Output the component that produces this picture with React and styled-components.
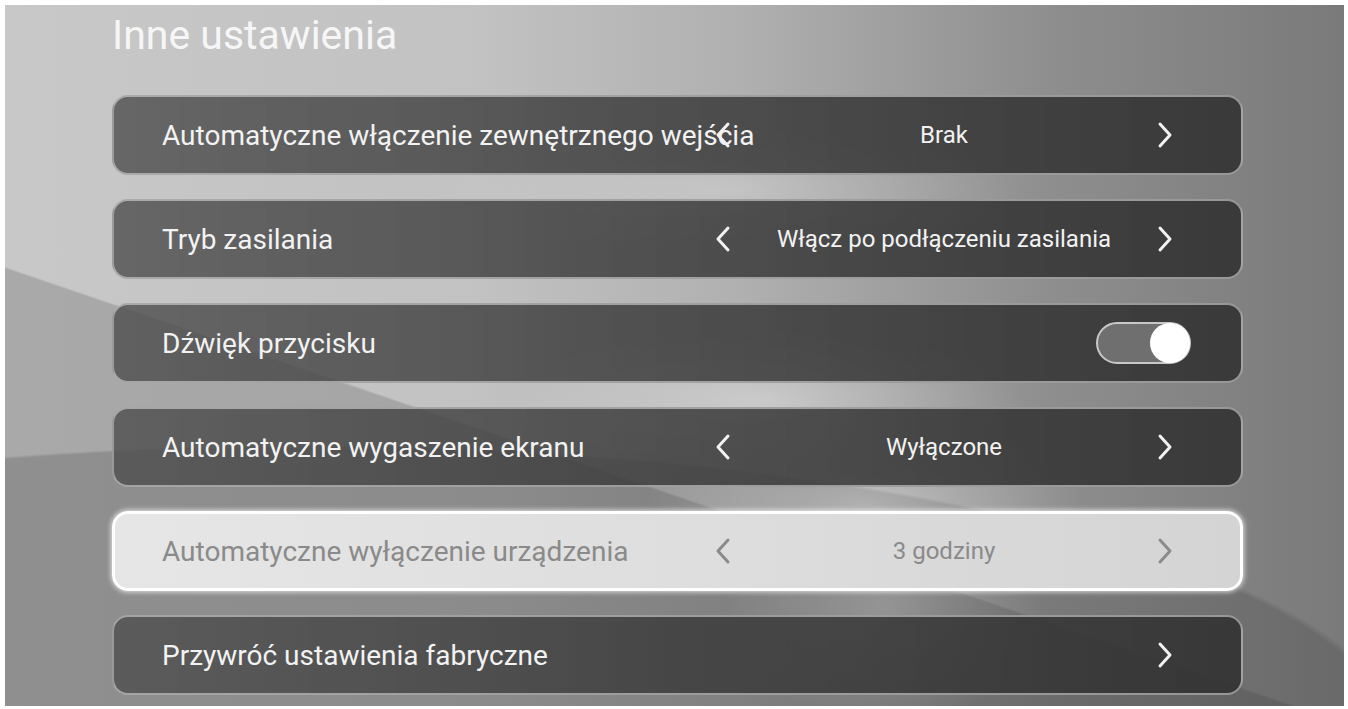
import React from 'react';
import styled, { createGlobalStyle } from 'styled-components';

const GlobalStyle = createGlobalStyle`
  html, body {
    margin: 0;
    padding: 0;
    background: #ffffff;
  }
  body {
    font-family: Roboto, "Noto Sans", "Liberation Sans", sans-serif;
  }
`;

const settings = [
  {
    label: 'Automatyczne włączenie zewnętrznego wejścia',
    value: 'Brak',
    prev: true,
    next: true,
  },
  {
    label: 'Tryb zasilania',
    value: 'Włącz po podłączeniu zasilania',
    prev: true,
    next: true,
  },
  { label: 'Dźwięk przycisku', toggle: true },
  {
    label: 'Automatyczne wygaszenie ekranu',
    value: 'Wyłączone',
    prev: true,
    next: true,
  },
  {
    label: 'Automatyczne wyłączenie urządzenia',
    value: '3 godziny',
    prev: true,
    next: true,
    focused: true,
  },
  { label: 'Przywróć ustawienia fabryczne', next: true },
];

const Chevron = ({ dir }) => (
  <svg width="16" height="28" viewBox="0 0 16 28" fill="none">
    <polyline
      points={dir === 'left' ? '13,3 3,14 13,25' : '3,3 13,14 3,25'}
      stroke="currentColor"
      strokeWidth="3"
      strokeLinecap="round"
      strokeLinejoin="round"
    />
  </svg>
);

const App = () => {
  return (
    <>
      <GlobalStyle />
      <Page>
        <Screen>
          <Title>Inne ustawienia</Title>
          <SettingsList>
            {settings.map(({ label, value, prev, next, toggle, focused }) => (
              <SettingRow key={label} focused={focused}>
                <Label>{label}</Label>
                {prev && (
                  <Arrow col={2}>
                    <Chevron dir="left" />
                  </Arrow>
                )}
                {value && <Value>{value}</Value>}
                {next && (
                  <Arrow col={4}>
                    <Chevron dir="right" />
                  </Arrow>
                )}
                {toggle && (
                  <Toggle>
                    <Knob />
                  </Toggle>
                )}
              </SettingRow>
            ))}
          </SettingsList>
        </Screen>
      </Page>
    </>
  );
};

const Page = styled.div`
  width: 1348px;
  height: 709px;
  box-sizing: border-box;
  padding: 5px 4px 3px 5px;
  background: #ffffff;
`;

const Screen = styled.div`
  width: 1339px;
  height: 701px;
  box-sizing: border-box;
  padding: 6px 101px 0 107px;
  overflow: hidden;
  background:
    radial-gradient(ellipse 260px 70px at 760px 395px, rgba(255, 255, 255, 0.35), rgba(255, 255, 255, 0) 100%),
    radial-gradient(ellipse 220px 90px at 860px 500px, rgba(255, 255, 255, 0.3), rgba(255, 255, 255, 0) 100%),
    radial-gradient(ellipse 160px 120px at 880px 600px, rgba(255, 255, 255, 0.22), rgba(255, 255, 255, 0) 100%),
    radial-gradient(ellipse 300px 60px at 720px 185px, rgba(255, 255, 255, 0.25), rgba(255, 255, 255, 0) 100%),
    radial-gradient(ellipse 1100px 300px at 300px 740px, rgba(40, 40, 40, 0.2) 99%, rgba(40, 40, 40, 0) 100%),
    linear-gradient(198.8deg, rgba(60, 60, 60, 0) 62%, rgba(60, 60, 60, 0.22) 62.2%),
    linear-gradient(90deg, #c8c8c8 0%, #c2c2c2 35%, #b0b0b0 55%, #8e8e8e 78%, #7a7a7a 100%);
`;

const Title = styled.h1`
  margin: 0;
  font-size: 41px;
  line-height: 48px;
  font-weight: 400;
  color: #f6f6f6;
`;

const SettingsList = styled.div`
  display: flex;
  flex-direction: column;
  gap: 24px;
  margin-top: 36px;
`;

const SettingRow = styled.div`
  display: grid;
  grid-template-columns: 551px 20px 1fr 20px;
  align-items: center;
  height: 80px;
  box-sizing: border-box;
  padding: ${(props) => (props.focused ? '0 65px 0 47px' : '0 66px 0 48px')};
  border-radius: 16px;
  border: ${(props) => (props.focused ? '3px solid #ffffff' : '2px solid rgba(215, 215, 215, 0.6)')};
  background: ${(props) =>
    props.focused
      ? 'linear-gradient(90deg, #e6e6e6 0%, #dddddd 55%, #d4d4d4 100%)'
      : 'linear-gradient(90deg, rgba(78, 78, 78, 0.8) 0%, rgba(60, 60, 60, 0.85) 50%, rgba(50, 50, 50, 0.9) 100%)'};
  color: ${(props) => (props.focused ? '#8a8a8a' : '#f2f2f2')};
  box-shadow: ${(props) => (props.focused ? '0 0 5px 1px rgba(255, 255, 255, 0.75)' : 'none')};
`;

const Label = styled.div`
  grid-column: 1;
  grid-row: 1;
  font-size: 28px;
  font-weight: 400;
  white-space: nowrap;
`;

const Arrow = styled.div`
  grid-column: ${(props) => props.col};
  grid-row: 1;
  display: flex;
  justify-content: center;
  align-items: center;
  height: 28px;
`;

const Value = styled.div`
  grid-column: 3;
  grid-row: 1;
  text-align: center;
  font-size: 24px;
  font-weight: 400;
  white-space: nowrap;
`;

const Toggle = styled.div`
  grid-column: 3 / 5;
  grid-row: 1;
  justify-self: end;
  margin-right: -16px;
  display: flex;
  justify-content: flex-end;
  align-items: center;
  width: 95px;
  height: 42px;
  box-sizing: border-box;
  border: 2px solid #c8c8c8;
  border-radius: 21px;
  background: #6f6f6f;
`;

const Knob = styled.div`
  width: 40px;
  height: 40px;
  margin-right: -1px;
  border-radius: 50%;
  background: #ffffff;
`;

export default App;
